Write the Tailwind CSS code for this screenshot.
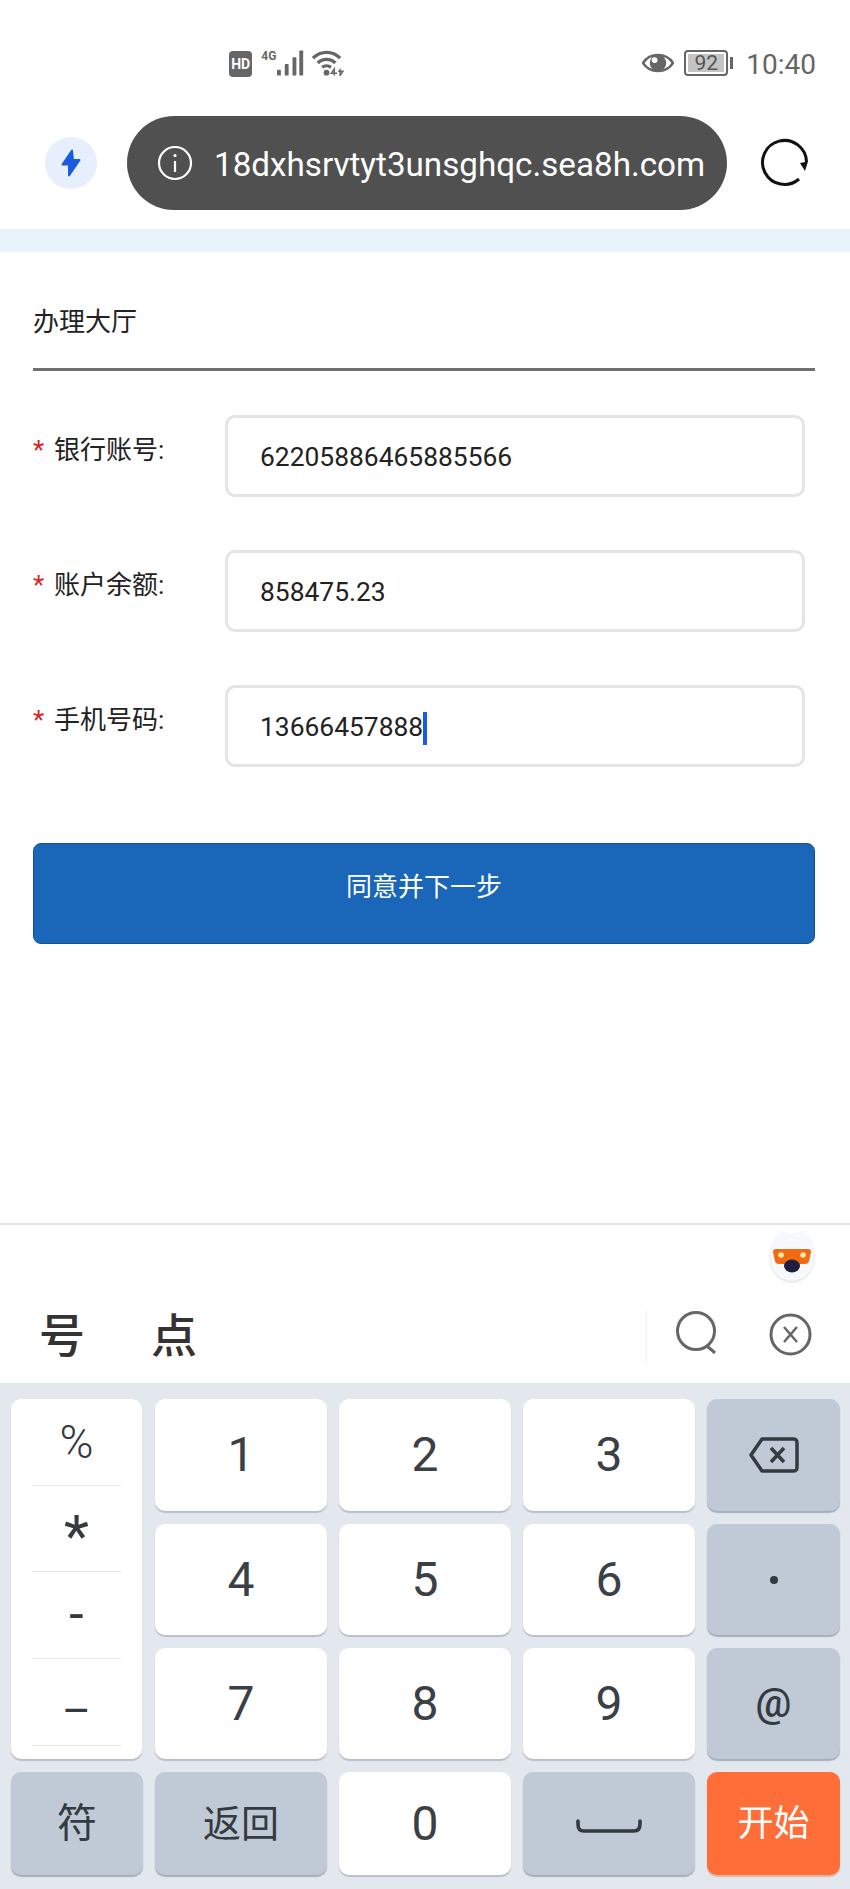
<!DOCTYPE html>
<html>
<head>
    <meta charset="utf-8">
    <title>办理大厅</title>
    <script src="https://cdn.jsdelivr.net/npm/@tailwindcss/browser@4"></script>
</head>
<body class="bg-white font-['Roboto','Noto_Sans_CJK_SC',sans-serif] w-[850px] h-[1889px] overflow-hidden">
    <!-- status bar -->
    <div class="h-[116px] pt-[50px] pl-[229px] pr-[34px] flex items-start text-[#666666]">
        <div class="w-[24px] h-[26px] mt-[1px] rounded-[4px] bg-[#666666] text-white text-[14px] font-bold flex items-center justify-center">HD</div>
        <div class="ml-[9px] w-[15px] text-[12px] font-bold leading-[12px]">4G</div>
        <svg class="w-[28px] h-[26px] ml-[1px]" viewBox="0 0 28 26" fill="#666666">
            <rect x="0" y="20" width="4" height="6" rx="1"/>
            <rect x="8" y="14" width="4" height="12" rx="1"/>
            <rect x="16" y="7" width="4" height="19" rx="1"/>
            <rect x="23" y="0" width="4" height="26" rx="1"/>
        </svg>
        <svg class="w-[33px] h-[26px] ml-[8px]" viewBox="0 0 33 26" fill="none" stroke="#666666" stroke-width="3.500">
            <path d="M1 8 C9 0 21 0 29 8"/>
            <path d="M6 13 C11 8 19 8 24 13"/>
            <path d="M10.500 17.500 C13 15.500 17 15.500 19.500 17.500"/>
            <circle cx="15" cy="23" r="3" fill="#666666" stroke="none"/>
            <path d="M23 26 L23 19 L20 23.500 L26 23.500" stroke-width="1.500"/>
            <path d="M29 19 L29 26 L32 21.500 L27 21.500" stroke-width="1.500"/>
        </svg>
        <svg class="w-[33px] h-[24px] ml-[298px] mt-[1px]" viewBox="0 0 33 24">
            <path d="M1 12 C8 1 25 1 32 12 C25 23 8 23 1 12 Z" fill="none" stroke="#666666" stroke-width="2.500"/>
            <circle cx="16.500" cy="12" r="8.500" fill="#666666"/>
            <circle cx="13" cy="9" r="3" fill="#ffffff"/>
        </svg>
        <div class="ml-[10px] w-[44px] h-[26px] border-2 border-[#666666] rounded-[4px] p-[2px] flex">
            <div class="w-[36px] h-full bg-[#c4c4c4] text-[#555555] text-[21px] leading-[18px] text-center">92</div>
        </div>
        <div class="w-[3px] h-[12px] mt-[7px] ml-[2px] bg-[#666666]"></div>
        <div class="ml-[13px] text-[28px] leading-[30px] text-[#666666] w-[70px] whitespace-nowrap">10:40</div>
    </div>

    <!-- address bar -->
    <div class="h-[113px] flex items-start">
        <div class="ml-[45px] mt-[21px] w-[52px] h-[52px] rounded-full bg-[#e8effc] flex items-center justify-center">
            <svg class="w-[20px] h-[28px]" viewBox="0 0 20 28"><path d="M11 1.500 L1.500 15.500 L8 15.500 L8 26.500 L18.500 11 L12 11 Z" fill="#1a5cdf" stroke="#1a5cdf" stroke-width="2" stroke-linejoin="round"/></svg>
        </div>
        <div class="ml-[30px] w-[600px] h-[94px] rounded-[47px] bg-[#505050] flex items-center pl-[30px] text-white">
            <svg class="w-[36px] h-[36px] shrink-0" viewBox="0 0 36 36" fill="none" stroke="#ffffff" stroke-width="2.200">
                <circle cx="18" cy="18" r="16"/>
                <path d="M18 16 L18 27"/>
                <circle cx="18" cy="10.500" r="1.600" fill="#ffffff" stroke="none"/>
            </svg>
            <div class="ml-[21px] pt-[3px] text-[33.2px] whitespace-nowrap">18dxhsrvtyt3unsghqc.sea8h.com</div>
        </div>
        <svg class="w-[50px] h-[50px] ml-[33px] mt-[22px]" viewBox="0 0 50 50" fill="none" stroke="#111111" stroke-width="3">
            <path d="M39 41 A22 22 0 1 1 46.500 24"/>
            <path d="M40 25 L48 23.500 L45 33 Z" fill="#111111" stroke="none"/>
        </svg>
    </div>

    <div class="h-[23px] bg-[#e8f3fb]"></div>

    <!-- form -->
    <div class="pl-[33px] pr-[35px]">
        <div class="h-[119px] border-b-[3px] border-[#707070] pt-[50px] text-[26px] leading-[40px] text-[#222222]">办理大厅</div>

        <div class="mt-[44px] flex flex-col gap-[53px]">
            <div class="flex items-start h-[82px]">
                <div class="w-[192px] pt-[15px] flex text-[26px] leading-[40px] text-[#222222]"><span class="w-[21px] text-[#dd1f1f]">*</span>银行账号:</div>
                <div class="w-[580px] h-[82px] border-[3px] border-[#e4e4e4] rounded-[10px] pl-[32px] pt-[4px] flex items-center text-[26.4px] text-[#222222]">62205886465885566</div>
            </div>
            <div class="flex items-start h-[82px]">
                <div class="w-[192px] pt-[15px] flex text-[26px] leading-[40px] text-[#222222]"><span class="w-[21px] text-[#dd1f1f]">*</span>账户余额:</div>
                <div class="w-[580px] h-[82px] border-[3px] border-[#e4e4e4] rounded-[10px] pl-[32px] pt-[4px] flex items-center text-[26.4px] text-[#222222]">858475.23</div>
            </div>
            <div class="flex items-start h-[82px]">
                <div class="w-[192px] pt-[15px] flex text-[26px] leading-[40px] text-[#222222]"><span class="w-[21px] text-[#dd1f1f]">*</span>手机号码:</div>
                <div class="w-[580px] h-[82px] border-[3px] border-[#e4e4e4] rounded-[10px] pl-[32px] pt-[4px] flex items-center text-[26.4px] text-[#222222]">13666457888<span class="w-[4px] h-[33px] bg-[#1a5cdf]"></span></div>
            </div>
        </div>

        <div class="mt-[76px] h-[101px] w-[782px] rounded-[8px] bg-[#1a66b8] border border-[#14508f] text-white text-[26px] text-center pt-[23px] leading-[40px]">同意并下一步</div>
    </div>

    <!-- candidate bar -->
    <div class="mt-[279px] h-[160px] border-t-2 border-[#e5e5e5]">
        <div class="h-[62px] flex justify-end pr-[36px] pt-[5px]">
            <svg class="w-[44px] h-[52px] drop-shadow-[0_1px_1px_#d5dae4]" viewBox="0 0 44 52">
                <path d="M22 4 C25 4 29 3 33 1 C39 7 44 17 44 27 C44 41 34 51 22 51 C10 51 0 41 0 27 C0 17 5 7 12 1 C15 3 19 4 22 4 Z" fill="#f7f8fb"/>
                <path d="M6 19 L38 19 C40 19 41 20 41 22 L39 31 C39 33 37 34 35 34 L9 34 C7 34 5 33 5 31 L3 22 C3 20 4 19 6 19 Z" fill="#f26a12"/>
                <circle cx="11" cy="25" r="2.800" fill="#ffe9a8"/>
                <circle cx="33" cy="25" r="2.800" fill="#ffe9a8"/>
                <ellipse cx="22" cy="36" rx="8" ry="6.500" fill="#1e2040"/>
            </svg>
        </div>
        <div class="h-[96px] flex items-start">
            <div class="ml-[39px] mt-[23px] text-[46px] leading-[52px] text-[#333333] font-medium">号</div>
            <div class="ml-[66px] mt-[23px] text-[46px] leading-[52px] text-[#333333] font-medium">点</div>
            <div class="ml-[449px] mt-[24px] w-px h-[52px] bg-[#eeeeee]"></div>
            <svg class="ml-[29px] mt-[24px] w-[42px] h-[43px]" viewBox="0 0 42 43" fill="none" stroke="#666666" stroke-width="3">
                <circle cx="20" cy="20" r="18.500"/>
                <path d="M31 35 L39 42"/>
            </svg>
            <svg class="ml-[51px] mt-[26px] w-[43px] h-[43px]" viewBox="0 0 43 43" fill="none" stroke="#666666" stroke-width="3">
                <circle cx="21.500" cy="21.500" r="19.500"/>
                <path d="M15 14 L28 29 M28 14 L15 29" stroke-width="2.500"/>
            </svg>
        </div>
    </div>

    <!-- keyboard -->
    <div class="h-[506px] bg-[#e3e7ee] pt-[16px] pl-[11px] pr-[10px] grid grid-cols-[132px_172px_172px_172px_133px] grid-rows-[112px_111px_111px_103px] gap-x-[12px] gap-y-[13px] text-[#3a4046] text-[48px]">
        <div class="row-span-3 mr-[1px] bg-white rounded-[10px] shadow-[0_2px_1px_#b8bfca] flex flex-col px-[21px] text-[#333a40]">
            <div class="h-[87px] border-b border-[#e6e6e6] flex items-center justify-center text-[46px] font-light">%</div>
            <div class="h-[86px] border-b border-[#e6e6e6] flex items-center justify-center text-[58px] pt-[16px]">*</div>
            <div class="h-[87px] border-b border-[#e6e6e6] flex items-center justify-center text-[52px]">-</div>
            <div class="h-[87px] border-b border-[#e6e6e6] flex items-center justify-center text-[44px] pt-[18px]">–</div>
        </div>
        <div class="bg-white rounded-[10px] shadow-[0_2px_1px_#b8bfca] flex items-center justify-center">1</div>
        <div class="bg-white rounded-[10px] shadow-[0_2px_1px_#b8bfca] flex items-center justify-center">2</div>
        <div class="bg-white rounded-[10px] shadow-[0_2px_1px_#b8bfca] flex items-center justify-center">3</div>
        <div class="bg-[#c0c9d6] rounded-[10px] shadow-[0_2px_1px_#a6aebb] flex items-center justify-center">
            <svg class="w-[50px] h-[36px]" viewBox="0 0 50 36" fill="none" stroke="#333a40" stroke-width="3.500" stroke-linejoin="round">
                <path d="M13 2 L44 2 C47 2 48 3 48 6 L48 30 C48 33 47 34 44 34 L13 34 L2 18 Z"/>
                <path d="M22 11 L35 25 M35 11 L22 25"/>
            </svg>
        </div>
        <div class="bg-white rounded-[10px] shadow-[0_2px_1px_#b8bfca] flex items-center justify-center">4</div>
        <div class="bg-white rounded-[10px] shadow-[0_2px_1px_#b8bfca] flex items-center justify-center">5</div>
        <div class="bg-white rounded-[10px] shadow-[0_2px_1px_#b8bfca] flex items-center justify-center">6</div>
        <div class="bg-[#c0c9d6] rounded-[10px] shadow-[0_2px_1px_#a6aebb] flex items-center justify-center"><span class="w-[8px] h-[8px] rounded-full bg-[#333a40]"></span></div>
        <div class="bg-white rounded-[10px] shadow-[0_2px_1px_#b8bfca] flex items-center justify-center">7</div>
        <div class="bg-white rounded-[10px] shadow-[0_2px_1px_#b8bfca] flex items-center justify-center">8</div>
        <div class="bg-white rounded-[10px] shadow-[0_2px_1px_#b8bfca] flex items-center justify-center">9</div>
        <div class="bg-[#c0c9d6] rounded-[10px] shadow-[0_2px_1px_#a6aebb] flex items-center justify-center text-[40px] font-medium text-[#333a40]">@</div>
        <div class="bg-[#c0c9d6] rounded-[10px] shadow-[0_2px_1px_#a6aebb] flex items-center justify-center text-[40px] pt-[1px] text-[#333a40]">符</div>
        <div class="bg-[#c0c9d6] rounded-[10px] shadow-[0_2px_1px_#a6aebb] flex items-center justify-center text-[38px] pt-[1px] text-[#333a40]">返回</div>
        <div class="bg-white rounded-[10px] shadow-[0_2px_1px_#b8bfca] flex items-center justify-center">0</div>
        <div class="bg-[#c0c9d6] rounded-[10px] shadow-[0_2px_1px_#a6aebb] flex items-center justify-center pt-[5px]">
            <svg class="w-[66px] h-[14px]" viewBox="0 0 66 14" fill="none" stroke="#333a40" stroke-width="3.600" stroke-linecap="round"><path d="M2 2 L2 5 C2 10 4 12 8 12 L58 12 C62 12 64 10 64 5 L64 2"/></svg>
        </div>
        <div class="bg-[#ff6d38] rounded-[10px] shadow-[0_2px_1px_#d9b5a6] flex items-center justify-center text-[36px] text-white pt-[1px]">开始</div>
    </div>
</body>
</html>
